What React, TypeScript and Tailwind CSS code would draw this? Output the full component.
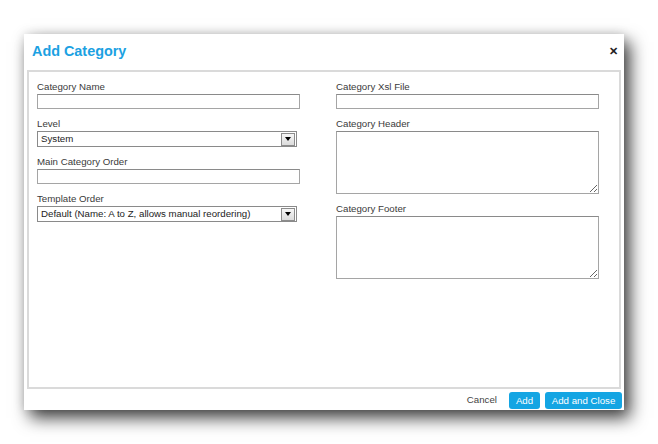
const FONT = { fontFamily: '"Liberation Sans", Arial, sans-serif' };

function Field({ label, children }: { label: string; children: React.ReactNode }) {
  return (
    <div className="mb-2">
      <div className="h-[14px] text-[9.7px] leading-[14px] text-[#3a3a3a]">{label}</div>
      {children}
    </div>
  );
}

function TextInput() {
  return (
    <input
      type="text"
      className="block h-[15px] w-full border border-[#a5a5a5] border-t-[#8a8a8a] bg-white outline-none"
    />
  );
}

function Select({ value, width }: { value: string; width: string }) {
  return (
    <div className={`flex h-[16px] ${width} items-center border border-[#8a8a8a] bg-white`}>
      <span className="flex-1 truncate pl-[3px] text-[9.7px] leading-[14px] text-[#222]">{value}</span>
      <div className="mr-[1px] flex h-[13px] w-[14px] items-center justify-center border border-[#8c8c8c] bg-gradient-to-b from-[#f6f6f6] to-[#dcdcdc]">
        <div className="h-0 w-0 border-x-[3px] border-t-[4px] border-x-transparent border-t-black" />
      </div>
    </div>
  );
}

function TextArea() {
  return (
    <textarea className="block h-[63px] w-full resize border border-[#a5a5a5] border-t-[#8a8a8a] bg-white outline-none" />
  );
}

export default function App() {
  return (
    <div className="h-[444px] w-[658px] overflow-hidden bg-white pl-[24px] pt-[34px]" style={FONT}>
      <div className="flex h-[376px] w-[600px] flex-col bg-white shadow-[6px_8px_16px_rgba(0,0,0,0.75),0_0_10px_rgba(0,0,0,0.12)]">
        {/* header */}
        <div className="flex h-[36px] items-start justify-between pl-[8px] pr-[6px] pt-[8px]">
          <h1 className="text-[14.4px] font-bold leading-[18px] text-[#1ba1e2]">Add Category</h1>
          <span className="mt-[4px] text-[11px] font-bold leading-[11px] text-[#222]">✕</span>
        </div>

        {/* body panel */}
        <div className="mx-[3px] flex h-[319px] gap-[36px] border-2 border-[#dadada] px-[8px] pt-[8px]">
          <div className="w-[263px]">
            <Field label="Category Name">
              <TextInput />
            </Field>
            <Field label="Level">
              <Select value="System" width="w-[260px]" />
            </Field>
            <Field label="Main Category Order">
              <TextInput />
            </Field>
            <Field label="Template Order">
              <Select value="Default (Name: A to Z, allows manual reordering)" width="w-[260px]" />
            </Field>
          </div>
          <div className="w-[263px]">
            <Field label="Category Xsl File">
              <TextInput />
            </Field>
            <Field label="Category Header">
              <TextArea />
            </Field>
            <Field label="Category Footer">
              <TextArea />
            </Field>
          </div>
        </div>

        {/* footer */}
        <div className="flex flex-1 items-center justify-end gap-[5px] pr-[2px] pt-[2px]">
          <span className="mr-[7px] text-[9.7px] text-[#444]">Cancel</span>
          <button className="h-[17px] w-[31px] rounded-[3px] bg-[#14a5e3] text-[9.7px] leading-[17px] text-white">
            Add
          </button>
          <button className="h-[17px] w-[77px] rounded-[3px] bg-[#14a5e3] text-[9.7px] leading-[17px] text-white">
            Add and Close
          </button>
        </div>
      </div>
    </div>
  );
}
